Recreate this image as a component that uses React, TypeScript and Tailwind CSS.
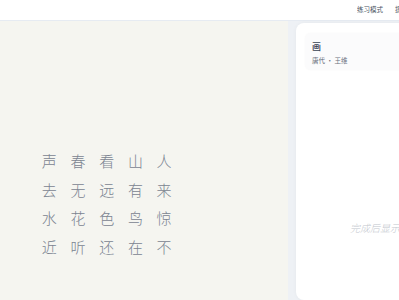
const poem = ['声春看山人', '去无远有来', '水花色鸟惊', '近听还在不']

export default function App() {
  return (
    <div className="flex h-[300px] w-[399px] flex-col overflow-hidden bg-[#eef1f5] font-['Noto_Sans_CJK_SC',sans-serif]">
      {/* Header */}
      <header className="flex h-[21px] shrink-0 items-center border-b border-[#e6ebf2] bg-white">
        <nav className="ml-[357px] flex w-[42px] shrink-0 gap-[12px] overflow-hidden whitespace-nowrap text-[6.5px] text-[#4b5563]">
          <span>练习模式</span>
          <span>提示</span>
        </nav>
      </header>

      <main className="flex min-h-0 flex-1">
        {/* Poem board */}
        <section className="w-[288px] shrink-0 bg-[#f5f5f0] pl-[35px] pt-[125px]">
          <div className="flex flex-col">
            {poem.map((row, r) => (
              <div key={r} className="flex">
                {row.split('').map((ch, c) => (
                  <span
                    key={c}
                    className="flex h-[28.7px] w-[28.7px] items-center justify-center text-[15px] font-light leading-none text-[#7b8491]"
                  >
                    {ch}
                  </span>
                ))}
              </div>
            ))}
          </div>
        </section>

        {/* Info card */}
        <aside className="ml-[8px] mt-[2px] flex w-[178px] shrink-0 flex-col rounded-lg bg-white px-[9px] pt-[10px] shadow-[0_0_4px_rgba(0,0,0,0.04)]">
          <div className="h-[37px] rounded-md bg-[#fbfbfc] px-[7px] pt-[8px] shadow-[0_0_2px_rgba(0,0,0,0.04)]">
            <div className="text-[9px] font-medium leading-[11px] text-[#374151]">画</div>
            <div className="mt-[4px] text-[6.5px] leading-[8px] text-[#6b7280]">唐代 · 王维</div>
          </div>
          <p className="mt-[150px] text-center text-[10px] font-light italic text-[#c2c6cd]">完成后显示诗句</p>
        </aside>
      </main>
    </div>
  )
}
